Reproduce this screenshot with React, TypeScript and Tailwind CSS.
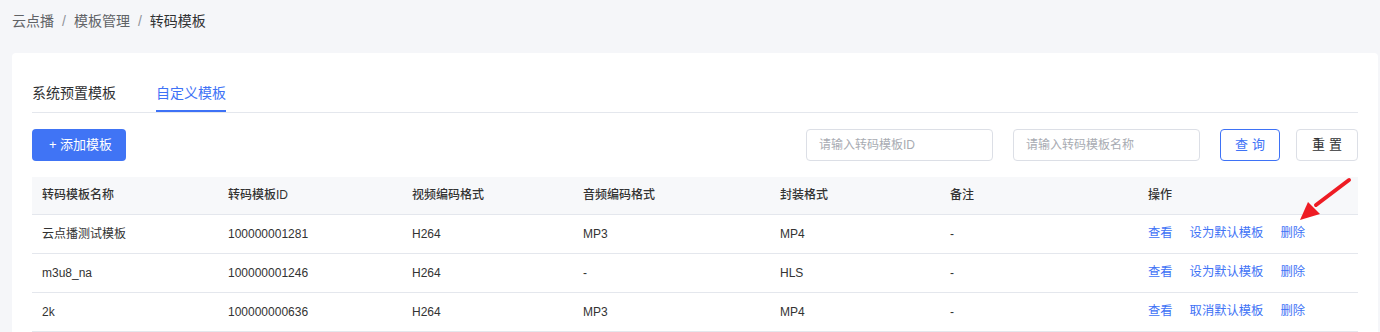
import React from 'react';

const rows = [
    { name: '云点播测试模板', id: '100000001281', video: 'H264', audio: 'MP3', container: 'MP4', remark: '-', toggle: '设为默认模板' },
    { name: 'm3u8_na', id: '100000001246', video: 'H264', audio: '-', container: 'HLS', remark: '-', toggle: '设为默认模板' },
    { name: '2k', id: '100000000636', video: 'H264', audio: 'MP3', container: 'MP4', remark: '-', toggle: '取消默认模板' },
];

const columns = [
    { title: '转码模板名称', width: 'w-[186px]' },
    { title: '转码模板ID', width: 'w-[184px]' },
    { title: '视频编码格式', width: 'w-[171px]' },
    { title: '音频编码格式', width: 'w-[197px]' },
    { title: '封装格式', width: 'w-[170px]' },
    { title: '备注', width: 'w-[198px]' },
    { title: '操作', width: 'w-[220px]' },
];

const App: React.FC = () => {
    return (
        <div
            className="min-h-screen bg-[#f5f6f9] text-[#333] overflow-hidden"
            style={{ fontFamily: '"Liberation Sans", "Noto Sans CJK SC", sans-serif' }}
        >
            {/* breadcrumb */}
            <div className="flex items-center h-[53px] pl-3 pb-[11px] text-sm">
                <span className="text-[#606266]">云点播</span>
                <span className="mx-2 text-[#909399]">/</span>
                <span className="text-[#606266]">模板管理</span>
                <span className="mx-2 text-[#909399]">/</span>
                <span className="text-[#303133]">转码模板</span>
            </div>

            <div className="relative ml-3 mr-[2px] bg-white rounded-[4px] px-5 pt-5 pb-10">
                {/* tabs */}
                <div className="flex gap-10 border-b border-[#e4e7ed] text-sm">
                    <div className="h-[39px] flex items-center text-[#303133]">系统预置模板</div>
                    <div className="h-[39px] flex items-center text-[#3e72f6] border-b-2 border-[#3e72f6] -mb-px pt-[2px]">自定义模板</div>
                </div>

                {/* toolbar */}
                <div className="flex items-center mt-4 h-8">
                    <button className="h-8 w-[94px] rounded-[4px] bg-[#4074f5] text-white text-[13px] flex items-center justify-center pl-[3px]">
                        + 添加模板
                    </button>
                    <div className="flex-1" />
                    <input
                        className="h-8 w-[187px] border border-[#dcdfe6] rounded-[4px] px-3 text-xs outline-none placeholder:text-[#a8abb2]"
                        placeholder="请输入转码模板ID"
                    />
                    <input
                        className="ml-5 h-8 w-[187px] border border-[#dcdfe6] rounded-[4px] px-3 text-xs outline-none placeholder:text-[#a8abb2]"
                        placeholder="请输入转码模板名称"
                    />
                    <button className="ml-5 h-8 w-[60px] border border-[#3e72f6] rounded-[4px] text-[#3e72f6] text-[13px] tracking-[4px] pl-[4px]">
                        查询
                    </button>
                    <button className="ml-4 h-8 w-[62px] border border-[#dcdfe6] rounded-[4px] text-[#303133] text-[13px] tracking-[4px] pl-[4px]">
                        重置
                    </button>
                </div>

                {/* table */}
                <table className="mt-4 w-full table-fixed border-collapse text-xs">
                    <thead>
                        <tr className="bg-[#f7f8fa] h-[37px] border-b border-[#e4e7ed]">
                            {columns.map((c) => (
                                <th key={c.title} className={`${c.width} text-left font-medium px-[10px] text-[#333]`}>
                                    {c.title}
                                </th>
                            ))}
                        </tr>
                    </thead>
                    <tbody>
                        {rows.map((r) => (
                            <tr key={r.id} className="h-[39px] border-b border-[#e4e7ed]">
                                <td className="px-[10px]">{r.name}</td>
                                <td className="px-[10px]">{r.id}</td>
                                <td className="px-[10px]">{r.video}</td>
                                <td className="px-[10px]">{r.audio}</td>
                                <td className="px-[10px]">{r.container}</td>
                                <td className="px-[10px]">{r.remark}</td>
                                <td className="px-[10px]">
                                    <div className="flex gap-[17px] text-[12.3px] text-[#3e72f6]">
                                        <span>查看</span>
                                        <span>{r.toggle}</span>
                                        <span>删除</span>
                                    </div>
                                </td>
                            </tr>
                        ))}
                    </tbody>
                </table>

                {/* annotation arrow */}
                <svg className="absolute left-[1268px] top-[122px] pointer-events-none" width="80" height="50" viewBox="0 0 80 50">
                    <line x1="69" y1="5" x2="36" y2="30" stroke="#ee1c24" strokeWidth="4" strokeLinecap="round" />
                    <polygon points="20,45 28,27 40,39" fill="#ee1c24" />
                </svg>
            </div>
        </div>
    );
};

export default App;
